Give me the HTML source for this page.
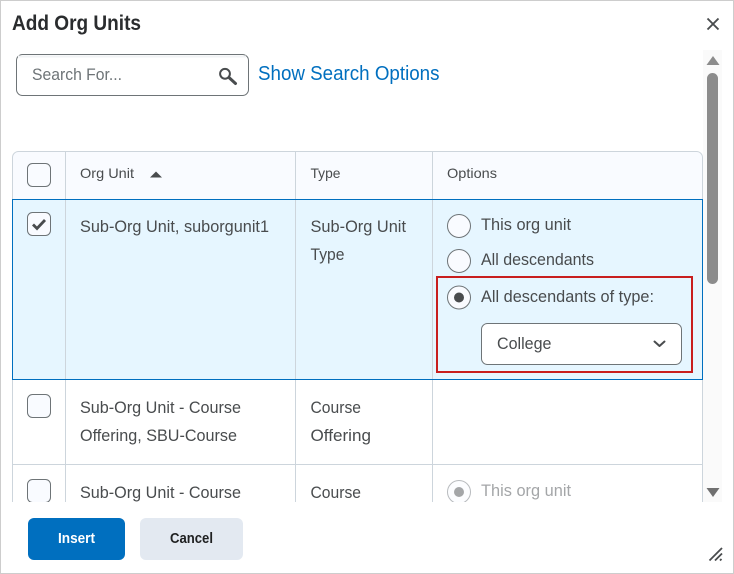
<!DOCTYPE html>
<html><head><meta charset="utf-8"><style>
html,body{margin:0;padding:0;width:734px;height:574px;overflow:hidden;background:#fff}
svg{display:block}
text{font-family:"Liberation Sans",sans-serif;fill:#494c4e}
.b{font-size:16.5px}
.h{font-size:14px}
</style></head><body>
<svg width="734" height="574" viewBox="0 0 734 574" xmlns="http://www.w3.org/2000/svg">
<rect x="0.5" y="0.5" width="733" height="573" fill="#fff" stroke="#cdcdcd"/>
<text x="12" y="30" font-size="21" font-weight="700" style="fill:#2a2c2e" textLength="129" lengthAdjust="spacingAndGlyphs">Add Org Units</text>
<path d="M707.5 18.500l11 11M718.500 18.500l-11 11" stroke="#494c4e" stroke-width="1.900"/>
<rect x="16.500" y="54.500" width="232" height="41" rx="6" fill="#fff" stroke="#6e7477"/>
<path d="M18 56.500h228" stroke="#f1f3f5" stroke-width="2"/>
<text x="32" y="80" class="b" style="fill:#6e7477" textLength="90" lengthAdjust="spacingAndGlyphs">Search For...</text>
<circle cx="225" cy="73.800" r="4.900" fill="none" stroke="#494c4e" stroke-width="2"/>
<path d="M229.500 78l6 5.500" stroke="#494c4e" stroke-width="3" stroke-linecap="round"/>
<text x="258" y="80" font-size="20" style="fill:#006fbf" textLength="181.500" lengthAdjust="spacingAndGlyphs">Show Search Options</text>

<rect x="703" y="50" width="19" height="452" fill="#fafafa"/>
<rect x="707" y="73" width="11" height="211" rx="5.500" fill="#8c8c8c"/>
<path d="M713 56l6.500 9h-13z" fill="#8c8c8c"/>
<path d="M706.500 488h13l-6.500 9z" fill="#707070"/>

<svg x="0" y="0" width="734" height="502" viewBox="0 0 734 502">
<path d="M12.500 199.500V157.500a6 6 0 0 1 6-6H696.500a6 6 0 0 1 6 6V199.500z" fill="#f9fbff" stroke="#cdd5dc"/>
<rect x="12.500" y="199.500" width="690" height="180" fill="#e6f6ff"/>
<path d="M12.500 380V520M702.500 380V520M12 464.500H703" stroke="#cdd5dc" fill="none"/>
<path d="M65.500 151V520M295.500 151V520M432.500 151V520" stroke="#cdd5dc" fill="none"/>
<rect x="12.500" y="199.500" width="690" height="180" fill="none" stroke="#006fbf"/>

<rect x="27.500" y="163.500" width="23" height="23" rx="5" fill="#f9fbff" stroke="#6e7477"/>
<rect x="27.500" y="212.500" width="23" height="23" rx="5" fill="#f9fbff" stroke="#6e7477"/>
<path d="M33 224.500l4 4 8-8.500" fill="none" stroke="#494c4e" stroke-width="2.800"/>
<rect x="27.500" y="394.500" width="23" height="23" rx="5" fill="#f9fbff" stroke="#6e7477"/>
<rect x="27.500" y="479.500" width="23" height="23" rx="5" fill="#f9fbff" stroke="#6e7477"/>

<text x="80" y="178" class="h" textLength="54" lengthAdjust="spacingAndGlyphs">Org Unit</text>
<path d="M156 171.500l6 6h-12z" fill="#494c4e"/>
<text x="310.500" y="178" class="h" textLength="30" lengthAdjust="spacingAndGlyphs">Type</text>
<text x="447" y="178" class="h" textLength="50" lengthAdjust="spacingAndGlyphs">Options</text>

<text x="80" y="232" class="b" textLength="189" lengthAdjust="spacingAndGlyphs">Sub-Org Unit, suborgunit1</text>
<text x="310.500" y="232" class="b" textLength="95.500" lengthAdjust="spacingAndGlyphs">Sub-Org Unit</text>
<text x="310.500" y="260" class="b" textLength="34" lengthAdjust="spacingAndGlyphs">Type</text>

<circle cx="459" cy="226" r="11.500" fill="#f9fbff" stroke="#6e7477"/>
<text x="481" y="230" class="b" textLength="90" lengthAdjust="spacingAndGlyphs">This org unit</text>
<circle cx="459" cy="261" r="11.500" fill="#f9fbff" stroke="#6e7477"/>
<text x="481" y="265" class="b" textLength="113" lengthAdjust="spacingAndGlyphs">All descendants</text>
<circle cx="459" cy="297.500" r="11.500" fill="#f9fbff" stroke="#6e7477"/>
<circle cx="459" cy="297.500" r="5" fill="#494c4e"/>
<text x="481" y="302" class="b" textLength="173" lengthAdjust="spacingAndGlyphs">All descendants of type:</text>

<rect x="437" y="277" width="255" height="95" fill="none" stroke="#c81e1e" stroke-width="2"/>
<rect x="481.500" y="323.500" width="200" height="41" rx="6" fill="#fff" stroke="#6e7477"/>
<text x="497" y="349" class="b" textLength="54.500" lengthAdjust="spacingAndGlyphs">College</text>
<path d="M654.500 341.500l5 4.500 5-4.500" fill="none" stroke="#494c4e" stroke-width="2" stroke-linecap="round" stroke-linejoin="round"/>

<text x="80" y="413" class="b" textLength="161" lengthAdjust="spacingAndGlyphs">Sub-Org Unit - Course</text>
<text x="80" y="441" class="b" textLength="157" lengthAdjust="spacingAndGlyphs">Offering, SBU-Course</text>
<text x="310.500" y="413" class="b" textLength="50.500" lengthAdjust="spacingAndGlyphs">Course</text>
<text x="310.500" y="441" class="b" textLength="60.500" lengthAdjust="spacingAndGlyphs">Offering</text>
<text x="80" y="498" class="b" textLength="161" lengthAdjust="spacingAndGlyphs">Sub-Org Unit - Course</text>
<text x="310.500" y="498" class="b" textLength="50.500" lengthAdjust="spacingAndGlyphs">Course</text>

<circle cx="459" cy="492" r="11.500" fill="#fcfdff" stroke="#b8bbbe"/>
<circle cx="459" cy="492" r="5" fill="#a4a6a8"/>
<text x="481" y="496" class="b" style="fill:#a4a6a8" textLength="90" lengthAdjust="spacingAndGlyphs">This org unit</text>
</svg>

<rect x="28" y="518" width="97" height="42" rx="6" fill="#006fbf"/>
<text x="58" y="543" font-size="14.500" font-weight="700" style="fill:#fff" textLength="37" lengthAdjust="spacingAndGlyphs">Insert</text>
<rect x="140" y="518" width="103" height="42" rx="6" fill="#e3e9f1"/>
<text x="170" y="543" font-size="14.500" font-weight="700" style="fill:#202122" textLength="43" lengthAdjust="spacingAndGlyphs">Cancel</text>

<path d="M709.500 560.500l12.500-12.500M715 560.500l7-7" stroke="#494c4e" stroke-width="1.800" fill="none"/>
<path d="M720 560.500l1.500-1.500" stroke="#494c4e" stroke-width="1.800" fill="none"/>
</svg>
</body></html>
